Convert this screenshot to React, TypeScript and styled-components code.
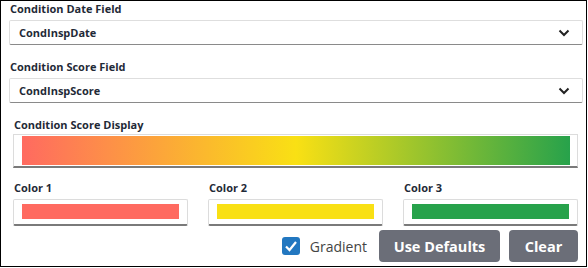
import styled, { createGlobalStyle } from "styled-components";

const GlobalStyle = createGlobalStyle`
  body {
    margin: 0;
    background: #fff;
    font-family: "Open Sans", "Liberation Sans", sans-serif;
  }
`;

const StyledPanel = styled.section`
  box-sizing: border-box;
  width: 587px;
  height: 267px;
  border: 1px solid #000;
  padding: 0 3px 0 8px;
  display: flex;
  flex-direction: column;
`;

const StyledField = styled.div<{ $top: number }>`
  display: flex;
  flex-direction: column;
  gap: 4px;
  margin-top: ${(p) => p.$top}px;
`;

const StyledLabel = styled.label`
  display: block;
  padding-left: 1px;
  font-size: 11px;
  line-height: 15px;
  font-weight: 700;
  color: #1f2a37;
`;

const StyledSelect = styled.div`
  box-sizing: border-box;
  height: 25px;
  display: flex;
  align-items: center;
  justify-content: space-between;
  padding: 0 12px 0 9px;
  border: 1px solid #dedede;
  border-bottom: 1px solid #8a8a8a;
  border-radius: 2px;
  font-size: 11px;
  font-weight: 700;
  color: #1f2a37;
`;

const StyledDisplay = styled.div`
  display: flex;
  flex-direction: column;
  padding: 0 5px 0 4px;
  margin-top: 14px;
`;

const StyledBarBox = styled.div`
  box-sizing: border-box;
  height: 34px;
  margin-top: 2px;
  padding: 1px 7px 1px 8px;
  border: 1px solid #dcdcdc;
  border-bottom: 2px solid #7a7a7a;
`;

const StyledBar = styled.div`
  height: 100%;
  background: linear-gradient(to right, #ff6a60, #f9e014 50%, #27a24b);
`;

const StyledColors = styled.div`
  display: grid;
  grid-template-columns: repeat(3, 1fr);
  column-gap: 20px;
  margin-top: 12px;
`;

const StyledColorField = styled.div`
  display: flex;
  flex-direction: column;
  gap: 4px;
`;

const StyledSwatchBox = styled.div`
  box-sizing: border-box;
  height: 27px;
  padding: 4px 8px 5px 8px;
  border: 1px solid #dcdcdc;
  border-bottom: 2px solid #7a7a7a;
  border-radius: 2px;
`;

const StyledSwatch = styled.div<{ $color: string }>`
  height: 100%;
  background: ${(p) => p.$color};
`;

const StyledActions = styled.div`
  display: flex;
  align-items: center;
  justify-content: flex-end;
  margin-top: 4px;
  gap: 9px;
`;

const StyledCheck = styled.label`
  display: flex;
  align-items: center;
  gap: 10px;
  margin-right: 3px;
  font-size: 14px;
  color: #444;
`;

const StyledBox = styled.span`
  width: 18px;
  height: 18px;
  border-radius: 3px;
  background: #2277c0;
  display: flex;
  align-items: center;
  justify-content: center;
`;

const StyledButton = styled.button<{ $width: number }>`
  width: ${(p) => p.$width}px;
  height: 32px;
  border: none;
  border-radius: 4px;
  background: #6b6e78;
  color: #fff;
  font-family: "Open Sans", "Liberation Sans", sans-serif;
  font-size: 14.5px;
  font-weight: 700;
  padding: 0;
`;

function Chevron() {
  return (
    <svg width="12" height="8" viewBox="0 0 12 8">
      <path d="M1.5 1.5 L6 6 L10.5 1.5" fill="none" stroke="#222" strokeWidth="2" />
    </svg>
  );
}

const colors = [
  { id: 1, label: "Color 1", value: "#ff6a60" },
  { id: 2, label: "Color 2", value: "#f9e014" },
  { id: 3, label: "Color 3", value: "#27a24b" },
];

function App() {
  return (
    <StyledPanel>
      <GlobalStyle />
      <StyledField $top={0}>
        <StyledLabel>Condition Date Field</StyledLabel>
        <StyledSelect>
          CondInspDate
          <Chevron />
        </StyledSelect>
      </StyledField>
      <StyledField $top={14}>
        <StyledLabel>Condition Score Field</StyledLabel>
        <StyledSelect>
          CondInspScore
          <Chevron />
        </StyledSelect>
      </StyledField>
      <StyledDisplay>
        <StyledLabel>Condition Score Display</StyledLabel>
        <StyledBarBox>
          <StyledBar />
        </StyledBarBox>
        <StyledColors>
          {colors.map((c) => (
            <StyledColorField key={c.id}>
              <StyledLabel>{c.label}</StyledLabel>
              <StyledSwatchBox>
                <StyledSwatch $color={c.value} />
              </StyledSwatchBox>
            </StyledColorField>
          ))}
        </StyledColors>
        <StyledActions>
          <StyledCheck>
            <StyledBox>
              <svg width="14" height="12" viewBox="0 0 14 12">
                <path d="M2 6.5 L5.5 10 L12 2" fill="none" stroke="#fff" strokeWidth="2.2" />
              </svg>
            </StyledBox>
            Gradient
          </StyledCheck>
          <StyledButton $width={121}>Use Defaults</StyledButton>
          <StyledButton $width={69}>Clear</StyledButton>
        </StyledActions>
      </StyledDisplay>
    </StyledPanel>
  );
}

export default App;
